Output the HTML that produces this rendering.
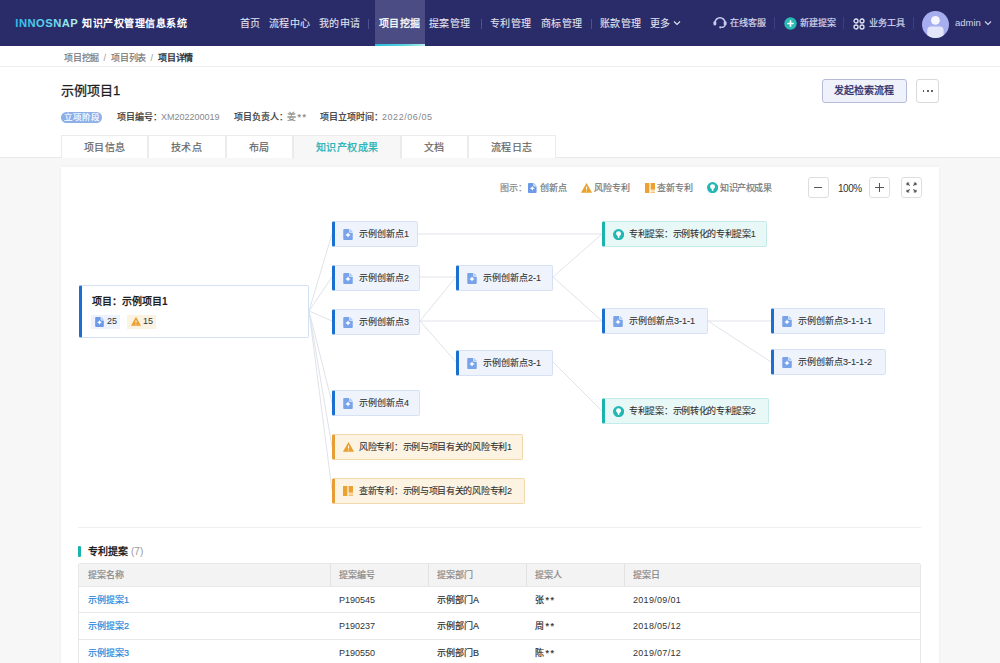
<!DOCTYPE html>
<html lang="zh-CN"><head><meta charset="utf-8">
<style>
*{margin:0;padding:0}
html,body{width:1000px;height:663px;overflow:hidden;background:#f7f7f7;font-family:"Liberation Sans",sans-serif;color:#333}
.a{position:absolute;white-space:nowrap;line-height:14px}
</style></head><body>
<div class="a" style="left:0px;top:0px;width:1000px;height:46px;background:#2a2c6a;"></div>
<svg class="a" style="left:0px;top:0px" width="100" height="46" viewBox="0 0 100 46"><defs><linearGradient id="lg" x1="15" y1="0" x2="78" y2="0" gradientUnits="userSpaceOnUse"><stop offset="0" stop-color="#2dbde8"/><stop offset="0.55" stop-color="#62d6ea"/><stop offset="1" stop-color="#b8f4ec"/></linearGradient></defs><text x="15.3" y="27" font-family="Liberation Sans" font-weight="bold" font-size="11.2" textLength="62.5" lengthAdjust="spacing" fill="url(#lg)" stroke="url(#lg)" stroke-width="0">INNOSNAP</text></svg>
<div class="a" style="left:82px;top:16px;font-size:10px;color:#fff;font-weight:bold;letter-spacing:0.55px;line-height:16px">知识产权管理信息系统</div>
<div class="a" style="left:375px;top:0px;width:50px;height:46px;background:#4a4c83;"></div>
<div class="a" style="left:375px;top:44px;width:50px;height:2px;background:linear-gradient(90deg,#27bcd8,#5fd3e0 60%,#b5f1ea);"></div>
<div class="a" style="left:379px;top:16px;font-size:10px;color:#fff;font-weight:normal;letter-spacing:0.25px;line-height:16px;-webkit-text-stroke:0.3px #fff">项目挖掘</div>
<div class="a" style="left:240px;top:16px;font-size:10px;color:#e3e4f1;font-weight:normal;letter-spacing:0.25px;line-height:16px;-webkit-text-stroke:0.08px #e3e4f1">首页</div>
<div class="a" style="left:269px;top:16px;font-size:10px;color:#e3e4f1;font-weight:normal;letter-spacing:0.25px;line-height:16px;-webkit-text-stroke:0.08px #e3e4f1">流程中心</div>
<div class="a" style="left:319px;top:16px;font-size:10px;color:#e3e4f1;font-weight:normal;letter-spacing:0.25px;line-height:16px;-webkit-text-stroke:0.08px #e3e4f1">我的申请</div>
<div class="a" style="left:429px;top:16px;font-size:10px;color:#e3e4f1;font-weight:normal;letter-spacing:0.25px;line-height:16px;-webkit-text-stroke:0.08px #e3e4f1">提案管理</div>
<div class="a" style="left:490px;top:16px;font-size:10px;color:#e3e4f1;font-weight:normal;letter-spacing:0.25px;line-height:16px;-webkit-text-stroke:0.08px #e3e4f1">专利管理</div>
<div class="a" style="left:541px;top:16px;font-size:10px;color:#e3e4f1;font-weight:normal;letter-spacing:0.25px;line-height:16px;-webkit-text-stroke:0.08px #e3e4f1">商标管理</div>
<div class="a" style="left:600px;top:16px;font-size:10px;color:#e3e4f1;font-weight:normal;letter-spacing:0.25px;line-height:16px;-webkit-text-stroke:0.08px #e3e4f1">账款管理</div>
<div class="a" style="left:650px;top:16px;font-size:10px;color:#e3e4f1;font-weight:normal;letter-spacing:0.25px;line-height:16px;-webkit-text-stroke:0.08px #e3e4f1">更多</div>
<div class="a" style="left:368px;top:19px;width:1px;height:10px;background:#4d5090;"></div>
<div class="a" style="left:481px;top:19px;width:1px;height:10px;background:#4d5090;"></div>
<div class="a" style="left:591px;top:19px;width:1px;height:10px;background:#4d5090;"></div>
<svg class="a" style="left:673px;top:20px" width="8" height="6" viewBox="0 0 8 6"><path d="M1 1.5L4 4.5L7 1.5" fill="none" stroke="#e3e4f1" stroke-width="1.1"/></svg>
<svg class="a" style="left:713px;top:15px" width="14" height="13.5" viewBox="0 0 14 13.5"><g fill="#c9cbef"><path d="M2.1 7.6A4.9 4.9 0 0 1 11.9 7.6" fill="none" stroke="#c9cbef" stroke-width="1.5"/><rect x="0.4" y="6.2" width="2.9" height="4.2" rx="1.3"/><rect x="10.7" y="6.2" width="2.9" height="4.2" rx="1.3"/><path d="M12.1 10Q11.6 12.3 8.2 12.4" fill="none" stroke="#c9cbef" stroke-width="1.2"/><circle cx="7.3" cy="12.3" r="1.15"/></g></svg>
<div class="a" style="left:730px;top:16px;font-size:9px;color:#d4d5ec;font-weight:normal;letter-spacing:0px;line-height:14px;-webkit-text-stroke:0.2px #d4d5ec">在线客服</div>
<div class="a" style="left:774px;top:17px;width:1px;height:12px;background:#3d4080;"></div>
<svg class="a" style="left:784px;top:17px" width="13" height="13" viewBox="0 0 13 13"><circle cx="6.5" cy="6.5" r="6.2" fill="#2bb9b3"/><path d="M6.5 3.3v6.4M3.3 6.5h6.4" stroke="#fff" stroke-width="1.6"/></svg>
<div class="a" style="left:800px;top:16px;font-size:9px;color:#d4d5ec;font-weight:normal;letter-spacing:0px;line-height:14px;-webkit-text-stroke:0.2px #d4d5ec">新建提案</div>
<div class="a" style="left:843px;top:17px;width:1px;height:12px;background:#3d4080;"></div>
<svg class="a" style="left:853px;top:18px" width="12" height="12" viewBox="0 0 12 12"><g fill="none" stroke="#e3e4f1" stroke-width="1.3"><circle cx="3" cy="3" r="2"/><circle cx="9" cy="3" r="2"/><circle cx="3" cy="9" r="2"/><circle cx="9" cy="9" r="2"/></g></svg>
<div class="a" style="left:869px;top:16px;font-size:9px;color:#d4d5ec;font-weight:normal;letter-spacing:0px;line-height:14px;-webkit-text-stroke:0.2px #d4d5ec">业务工具</div>
<div class="a" style="left:913px;top:17px;width:1px;height:12px;background:#3d4080;"></div>
<svg class="a" style="left:922px;top:11px" width="27" height="27" viewBox="0 0 27 27"><defs><clipPath id="cp"><circle cx="13.5" cy="13.5" r="13.5"/></clipPath></defs><circle cx="13.5" cy="13.5" r="13.5" fill="#a7aef0"/><g clip-path="url(#cp)"><circle cx="13.4" cy="9.3" r="4.4" fill="#f4f5fd"/><rect x="5.2" y="15.6" width="16.4" height="14" rx="4" fill="#e3e5fa"/></g></svg>
<div class="a" style="left:955px;top:16px;font-size:9.5px;color:#d2d4ea;font-weight:normal;letter-spacing:0px;line-height:14px">admin</div>
<svg class="a" style="left:984px;top:20px" width="8" height="6" viewBox="0 0 8 6"><path d="M1 1.5L4 4.5L7 1.5" fill="none" stroke="#d2d4ea" stroke-width="1.1"/></svg>
<div class="a" style="left:0px;top:46px;width:1000px;height:112px;background:#fff;"></div>
<div class="a" style="left:0px;top:66px;width:1000px;height:1px;background:#eeeeee;"></div>
<div class="a" style="left:64px;top:51px;font-size:9px;color:#777;font-weight:normal;letter-spacing:-0.2px;line-height:14px;-webkit-text-stroke:0.2px #777">项目挖掘</div>
<div class="a" style="left:103.5px;top:51px;font-size:9px;color:#999;font-weight:normal;letter-spacing:0px;line-height:14px">/</div>
<div class="a" style="left:111px;top:51px;font-size:9px;color:#777;font-weight:normal;letter-spacing:-0.2px;line-height:14px;-webkit-text-stroke:0.2px #777">项目列表</div>
<div class="a" style="left:150.5px;top:51px;font-size:9px;color:#999;font-weight:normal;letter-spacing:0px;line-height:14px">/</div>
<div class="a" style="left:158px;top:51px;font-size:9px;color:#333;font-weight:bold;letter-spacing:-0.2px;line-height:14px">项目详情</div>
<div class="a" style="left:61px;top:82px;font-size:13px;color:#1f1f1f;font-weight:normal;letter-spacing:0px;line-height:18px;-webkit-text-stroke:0.3px #1f1f1f">示例项目1</div>
<div class="a" style="left:61px;top:112px;width:41px;height:11px;background:#8caee9;border-radius:6px"></div>
<div class="a" style="left:64px;top:110px;font-size:8.5px;color:#f8fbff;font-weight:normal;letter-spacing:0.05px;line-height:14px;-webkit-text-stroke:0.2px #f8fbff">立项阶段</div>
<div class="a" style="left:117px;top:110px;font-size:9px;color:#333;font-weight:normal;letter-spacing:0px;line-height:14px;-webkit-text-stroke:0.22px #333">项目编号：</div>
<div class="a" style="left:161px;top:110px;font-size:9px;color:#888;font-weight:normal;letter-spacing:0px;line-height:14px">XM202200019</div>
<div class="a" style="left:234px;top:110px;font-size:9px;color:#333;font-weight:normal;letter-spacing:0px;line-height:14px;-webkit-text-stroke:0.22px #333">项目负责人：</div>
<div class="a" style="left:287px;top:110px;font-size:9px;color:#888;font-weight:normal;letter-spacing:0px;line-height:14px;-webkit-text-stroke:0.2px #888">姜<span style="margin-left:1.5px;letter-spacing:1.4px">**</span></div>
<div class="a" style="left:320px;top:110px;font-size:9px;color:#333;font-weight:normal;letter-spacing:0px;line-height:14px;-webkit-text-stroke:0.22px #333">项目立项时间：</div>
<div class="a" style="left:382px;top:110px;font-size:9px;color:#888;font-weight:normal;letter-spacing:0.55px;line-height:14px">2022/06/05</div>
<div class="a" style="left:822px;top:79px;width:85px;height:24px;background:#eff2fb;border:1px solid #b5bad9;border-radius:3px;box-sizing:border-box"></div>
<div class="a" style="left:834px;top:83px;font-size:10px;color:#2d306c;font-weight:normal;letter-spacing:0.05px;line-height:16px;-webkit-text-stroke:0.3px #2d306c">发起检索流程</div>
<div class="a" style="left:916px;top:79px;width:23px;height:24px;background:#fff;border:1px solid #d9d9d9;border-radius:3px;box-sizing:border-box"></div>
<div class="a" style="left:922.5px;top:90px;width:1.8px;height:1.8px;background:#333;border-radius:1px"></div>
<div class="a" style="left:926.8px;top:90px;width:1.8px;height:1.8px;background:#333;border-radius:1px"></div>
<div class="a" style="left:931.1px;top:90px;width:1.8px;height:1.8px;background:#333;border-radius:1px"></div>
<div class="a" style="left:0px;top:158px;width:1000px;height:505px;background:#f7f7f7;"></div>
<div class="a" style="left:0px;top:157px;width:1000px;height:1px;background:#e9e9e9;"></div>
<div class="a" style="left:61px;top:135px;width:87px;height:23px;background:#fff;border:1px solid #ebebeb;border-bottom:none;box-sizing:border-box"></div>
<div class="a" style="left:148px;top:135px;width:78px;height:23px;background:#fff;border:1px solid #ebebeb;border-bottom:none;box-sizing:border-box"></div>
<div class="a" style="left:226px;top:135px;width:67px;height:23px;background:#fff;border:1px solid #ebebeb;border-bottom:none;box-sizing:border-box"></div>
<div class="a" style="left:293px;top:135px;width:108px;height:23px;background:#f7f7f7;border:1px solid #ebebeb;border-bottom:none;box-sizing:border-box;height:24px"></div>
<div class="a" style="left:401px;top:135px;width:67px;height:23px;background:#fff;border:1px solid #ebebeb;border-bottom:none;box-sizing:border-box"></div>
<div class="a" style="left:468px;top:135px;width:88px;height:23px;background:#fff;border:1px solid #ebebeb;border-bottom:none;box-sizing:border-box"></div>
<div class="a" style="left:84px;top:140px;font-size:10px;color:#666;font-weight:normal;letter-spacing:0.3px;line-height:16px;-webkit-text-stroke:0.2px #666">项目信息</div>
<div class="a" style="left:171px;top:140px;font-size:10px;color:#666;font-weight:normal;letter-spacing:0.3px;line-height:16px;-webkit-text-stroke:0.2px #666">技术点</div>
<div class="a" style="left:249px;top:140px;font-size:10px;color:#666;font-weight:normal;letter-spacing:0.3px;line-height:16px;-webkit-text-stroke:0.2px #666">布局</div>
<div class="a" style="left:316px;top:140px;font-size:10px;color:#1fb1b5;font-weight:normal;letter-spacing:0.4px;line-height:16px;-webkit-text-stroke:0.25px #1fb1b5">知识产权成果</div>
<div class="a" style="left:424px;top:140px;font-size:10px;color:#666;font-weight:normal;letter-spacing:0.3px;line-height:16px;-webkit-text-stroke:0.2px #666">文档</div>
<div class="a" style="left:491px;top:140px;font-size:10px;color:#666;font-weight:normal;letter-spacing:0.3px;line-height:16px;-webkit-text-stroke:0.2px #666">流程日志</div>
<div class="a" style="left:61px;top:167px;width:878px;height:500px;background:#fff;box-shadow:0 0 3px rgba(0,0,0,0.05)"></div>
<div class="a" style="left:500px;top:181px;font-size:9px;color:#888;font-weight:normal;letter-spacing:0px;line-height:14px;-webkit-text-stroke:0.2px #888">图示：</div>
<svg class="a" style="left:528px;top:182.5px" width="8.6" height="10" viewBox="0 0 9.5 11"><path d="M1 0H6V3A0.8 0.8 0 0 0 6.8 3.8H9.5V10A1 1 0 0 1 8.5 11H1A1 1 0 0 1 0 10V1A1 1 0 0 1 1 0Z" fill="#6d9ae6"/><path d="M6.8 0.1L9.5 2.9V3H6.8Z" fill="#6d9ae6" opacity="0.55"/><path d="M4.75 3.2Q5.05 5.3 7.4 5.9Q5.05 6.5 4.75 8.6Q4.45 6.5 2.1 5.9Q4.45 5.3 4.75 3.2Z" fill="#fff"/></svg>
<div class="a" style="left:540px;top:181px;font-size:9px;color:#777;font-weight:normal;letter-spacing:0px;line-height:14px;-webkit-text-stroke:0.2px #777">创新点</div>
<svg class="a" style="left:581px;top:183px" width="11" height="10" viewBox="0 0 11 10"><path d="M5.2 0.4Q5.5 0 5.8 0.4L10.8 9.2Q11 9.8 10.4 9.8H0.6Q0 9.8 0.2 9.2Z" fill="#eaa12f"/><path d="M5.5 3.6v3" stroke="#fff8e8" stroke-width="1.1"/><circle cx="5.5" cy="8" r="0.6" fill="#fff8e8"/></svg>
<div class="a" style="left:594px;top:181px;font-size:9px;color:#777;font-weight:normal;letter-spacing:0px;line-height:14px;-webkit-text-stroke:0.2px #777">风险专利</div>
<svg class="a" style="left:645px;top:183px" width="10" height="10" viewBox="0 0 9.6 9.6"><rect x="0" y="0" width="4.2" height="9.6" fill="#eba231"/><rect x="5.4" y="0" width="4.2" height="6.4" fill="#eba231"/><rect x="5.4" y="7.2" width="4.2" height="0.9" fill="#eba231" opacity="0.7"/><rect x="5.4" y="8.7" width="4.2" height="0.9" fill="#eba231" opacity="0.7"/></svg>
<div class="a" style="left:657px;top:181px;font-size:9px;color:#777;font-weight:normal;letter-spacing:0px;line-height:14px;-webkit-text-stroke:0.2px #777">查新专利</div>
<svg class="a" style="left:707px;top:182px" width="11.2" height="11.2" viewBox="0 0 11.2 11.2"><circle cx="5.6" cy="5.6" r="5.6" fill="#22b7b3"/><path d="M5.6 2.2A2.5 2.5 0 0 1 8.1 4.7Q8.1 5.9 6.5 6.9L6.3 8.9H4.9L4.7 6.9Q3.1 5.9 3.1 4.7A2.5 2.5 0 0 1 5.6 2.2Z" fill="#fff"/></svg>
<div class="a" style="left:720px;top:181px;font-size:9px;color:#777;font-weight:normal;letter-spacing:-0.4px;line-height:14px;-webkit-text-stroke:0.2px #777">知识产权成果</div>
<div class="a" style="left:808px;top:177px;width:20.5px;height:20.5px;background:#fff;border:1px solid #dedede;border-radius:3px;box-sizing:border-box"></div>
<div class="a" style="left:869px;top:177px;width:20.5px;height:20.5px;background:#fff;border:1px solid #dedede;border-radius:3px;box-sizing:border-box"></div>
<div class="a" style="left:901px;top:177px;width:20.5px;height:20.5px;background:#fff;border:1px solid #dedede;border-radius:3px;box-sizing:border-box"></div>
<div class="a" style="left:814px;top:187px;width:8px;height:1.2px;background:#555;"></div>
<div class="a" style="left:838px;top:182px;font-size:10px;color:#333;font-weight:normal;letter-spacing:-0.45px;line-height:14px">100%</div>
<div class="a" style="left:875px;top:187px;width:9px;height:1.2px;background:#555;"></div>
<div class="a" style="left:878.9px;top:183px;width:1.2px;height:9px;background:#555;"></div>
<svg class="a" style="left:906px;top:182px" width="11" height="11" viewBox="0 0 11 11"><g fill="none" stroke="#555" stroke-width="1.1"><path d="M1 1L3.6 3.6M1 1h2.2M1 1v2.2"/><path d="M10 1L7.4 3.6M10 1H7.8M10 1v2.2"/><path d="M1 10L3.6 7.4M1 10h2.2M1 10V7.8"/><path d="M10 10L7.4 7.4M10 10H7.8M10 10V7.8"/></g></svg>
<svg class="a" style="left:0px;top:0px" width="1000" height="663" viewBox="0 0 1000 663"><path d="M309 311L332 234M309 311L332 277M309 311L332 321M309 311L332 403M309 311L332 447M309 311L332 490 M418 234H602M420 277H456M420 321H602M420 321L456 277M420 321L456 362 M553 277L602 234M553 277L602 321M553 362L602 411 M708 321H771M708 321L771 362" stroke="#dfe3ea" stroke-width="1" fill="none"/></svg>
<div class="a" style="left:79px;top:285px;width:230px;height:53px;background:#fff;border:1px solid #d4e0f3;border-left:3px solid #1a6fd1;border-radius:2px;box-sizing:border-box"></div>
<div class="a" style="left:92px;top:294px;font-size:10px;color:#1f1f1f;font-weight:bold;letter-spacing:0px;line-height:16px">项目：示例项目1</div>
<div class="a" style="left:91px;top:315px;width:29px;height:14px;background:#edf2fc;"></div>
<svg class="a" style="left:95px;top:317px" width="9" height="10" viewBox="0 0 9.5 11"><path d="M1 0H6V3A0.8 0.8 0 0 0 6.8 3.8H9.5V10A1 1 0 0 1 8.5 11H1A1 1 0 0 1 0 10V1A1 1 0 0 1 1 0Z" fill="#6d9ae6"/><path d="M6.8 0.1L9.5 2.9V3H6.8Z" fill="#6d9ae6" opacity="0.55"/><path d="M4.75 3.2Q5.05 5.3 7.4 5.9Q5.05 6.5 4.75 8.6Q4.45 6.5 2.1 5.9Q4.45 5.3 4.75 3.2Z" fill="#fff"/></svg>
<div class="a" style="left:107px;top:314px;font-size:9px;color:#333;font-weight:normal;letter-spacing:0px;line-height:14px">25</div>
<div class="a" style="left:127px;top:315px;width:29px;height:14px;background:#fcf2e1;"></div>
<svg class="a" style="left:130.5px;top:317px" width="10" height="9" viewBox="0 0 11 10"><path d="M5.2 0.4Q5.5 0 5.8 0.4L10.8 9.2Q11 9.8 10.4 9.8H0.6Q0 9.8 0.2 9.2Z" fill="#eaa12f"/><path d="M5.5 3.6v3" stroke="#fff8e8" stroke-width="1.1"/><circle cx="5.5" cy="8" r="0.6" fill="#fff8e8"/></svg>
<div class="a" style="left:143px;top:314px;font-size:9px;color:#333;font-weight:normal;letter-spacing:0px;line-height:14px">15</div>
<div class="a" style="left:332px;top:221px;width:86px;height:26px;background:#eef3fc;border:1px solid #d6e1f4;border-left:3px solid #1a6fd1;border-radius:2px;box-sizing:border-box"></div>
<svg class="a" style="left:342.5px;top:228.5px" width="10" height="11" viewBox="0 0 9.5 11"><path d="M1 0H6V3A0.8 0.8 0 0 0 6.8 3.8H9.5V10A1 1 0 0 1 8.5 11H1A1 1 0 0 1 0 10V1A1 1 0 0 1 1 0Z" fill="#78a3e9"/><path d="M6.8 0.1L9.5 2.9V3H6.8Z" fill="#78a3e9" opacity="0.55"/><path d="M4.75 3.2Q5.05 5.3 7.4 5.9Q5.05 6.5 4.75 8.6Q4.45 6.5 2.1 5.9Q4.45 5.3 4.75 3.2Z" fill="#fff"/></svg>
<div class="a" style="left:359px;top:227px;font-size:9px;color:#333;font-weight:normal;letter-spacing:0px;line-height:14px;-webkit-text-stroke:0.1px #333">示例创新点1</div>
<div class="a" style="left:332px;top:265px;width:88px;height:26px;background:#eef3fc;border:1px solid #d6e1f4;border-left:3px solid #1a6fd1;border-radius:2px;box-sizing:border-box"></div>
<svg class="a" style="left:342.5px;top:272.5px" width="10" height="11" viewBox="0 0 9.5 11"><path d="M1 0H6V3A0.8 0.8 0 0 0 6.8 3.8H9.5V10A1 1 0 0 1 8.5 11H1A1 1 0 0 1 0 10V1A1 1 0 0 1 1 0Z" fill="#78a3e9"/><path d="M6.8 0.1L9.5 2.9V3H6.8Z" fill="#78a3e9" opacity="0.55"/><path d="M4.75 3.2Q5.05 5.3 7.4 5.9Q5.05 6.5 4.75 8.6Q4.45 6.5 2.1 5.9Q4.45 5.3 4.75 3.2Z" fill="#fff"/></svg>
<div class="a" style="left:359px;top:271px;font-size:9px;color:#333;font-weight:normal;letter-spacing:0px;line-height:14px;-webkit-text-stroke:0.1px #333">示例创新点2</div>
<div class="a" style="left:332px;top:309px;width:88px;height:26px;background:#eef3fc;border:1px solid #d6e1f4;border-left:3px solid #1a6fd1;border-radius:2px;box-sizing:border-box"></div>
<svg class="a" style="left:342.5px;top:316.5px" width="10" height="11" viewBox="0 0 9.5 11"><path d="M1 0H6V3A0.8 0.8 0 0 0 6.8 3.8H9.5V10A1 1 0 0 1 8.5 11H1A1 1 0 0 1 0 10V1A1 1 0 0 1 1 0Z" fill="#78a3e9"/><path d="M6.8 0.1L9.5 2.9V3H6.8Z" fill="#78a3e9" opacity="0.55"/><path d="M4.75 3.2Q5.05 5.3 7.4 5.9Q5.05 6.5 4.75 8.6Q4.45 6.5 2.1 5.9Q4.45 5.3 4.75 3.2Z" fill="#fff"/></svg>
<div class="a" style="left:359px;top:315px;font-size:9px;color:#333;font-weight:normal;letter-spacing:0px;line-height:14px;-webkit-text-stroke:0.1px #333">示例创新点3</div>
<div class="a" style="left:332px;top:390px;width:88px;height:26px;background:#eef3fc;border:1px solid #d6e1f4;border-left:3px solid #1a6fd1;border-radius:2px;box-sizing:border-box"></div>
<svg class="a" style="left:342.5px;top:397.5px" width="10" height="11" viewBox="0 0 9.5 11"><path d="M1 0H6V3A0.8 0.8 0 0 0 6.8 3.8H9.5V10A1 1 0 0 1 8.5 11H1A1 1 0 0 1 0 10V1A1 1 0 0 1 1 0Z" fill="#78a3e9"/><path d="M6.8 0.1L9.5 2.9V3H6.8Z" fill="#78a3e9" opacity="0.55"/><path d="M4.75 3.2Q5.05 5.3 7.4 5.9Q5.05 6.5 4.75 8.6Q4.45 6.5 2.1 5.9Q4.45 5.3 4.75 3.2Z" fill="#fff"/></svg>
<div class="a" style="left:359px;top:396px;font-size:9px;color:#333;font-weight:normal;letter-spacing:0px;line-height:14px;-webkit-text-stroke:0.1px #333">示例创新点4</div>
<div class="a" style="left:332px;top:434px;width:191px;height:26px;background:#fdf3e2;border:1px solid #f2d9ac;border-left:3px solid #e79f35;border-radius:2px;box-sizing:border-box"></div>
<svg class="a" style="left:342.5px;top:442px" width="11" height="10" viewBox="0 0 11 10"><path d="M5.2 0.4Q5.5 0 5.8 0.4L10.8 9.2Q11 9.8 10.4 9.8H0.6Q0 9.8 0.2 9.2Z" fill="#eaa12f"/><path d="M5.5 3.6v3" stroke="#fff8e8" stroke-width="1.1"/><circle cx="5.5" cy="8" r="0.6" fill="#fff8e8"/></svg>
<div class="a" style="left:359px;top:440px;font-size:9px;color:#333;font-weight:normal;letter-spacing:-0.3px;line-height:14px;-webkit-text-stroke:0.1px #333">风险专利：示例与项目有关的风险专利1</div>
<div class="a" style="left:332px;top:478px;width:193px;height:26px;background:#fdf3e2;border:1px solid #f2d9ac;border-left:3px solid #e79f35;border-radius:2px;box-sizing:border-box"></div>
<svg class="a" style="left:342.5px;top:485.5px" width="10" height="10" viewBox="0 0 9.6 9.6"><rect x="0" y="0" width="4.2" height="9.6" fill="#eba231"/><rect x="5.4" y="0" width="4.2" height="6.4" fill="#eba231"/><rect x="5.4" y="7.2" width="4.2" height="0.9" fill="#eba231" opacity="0.7"/><rect x="5.4" y="8.7" width="4.2" height="0.9" fill="#eba231" opacity="0.7"/></svg>
<div class="a" style="left:359px;top:484px;font-size:9px;color:#333;font-weight:normal;letter-spacing:-0.3px;line-height:14px;-webkit-text-stroke:0.1px #333">查新专利：示例与项目有关的风险专利2</div>
<div class="a" style="left:456px;top:265px;width:97px;height:26px;background:#eef3fc;border:1px solid #d6e1f4;border-left:3px solid #1a6fd1;border-radius:2px;box-sizing:border-box"></div>
<svg class="a" style="left:466.5px;top:272.5px" width="10" height="11" viewBox="0 0 9.5 11"><path d="M1 0H6V3A0.8 0.8 0 0 0 6.8 3.8H9.5V10A1 1 0 0 1 8.5 11H1A1 1 0 0 1 0 10V1A1 1 0 0 1 1 0Z" fill="#78a3e9"/><path d="M6.8 0.1L9.5 2.9V3H6.8Z" fill="#78a3e9" opacity="0.55"/><path d="M4.75 3.2Q5.05 5.3 7.4 5.9Q5.05 6.5 4.75 8.6Q4.45 6.5 2.1 5.9Q4.45 5.3 4.75 3.2Z" fill="#fff"/></svg>
<div class="a" style="left:483px;top:271px;font-size:9px;color:#333;font-weight:normal;letter-spacing:0px;line-height:14px;-webkit-text-stroke:0.1px #333">示例创新点2-1</div>
<div class="a" style="left:456px;top:350px;width:97px;height:26px;background:#eef3fc;border:1px solid #d6e1f4;border-left:3px solid #1a6fd1;border-radius:2px;box-sizing:border-box"></div>
<svg class="a" style="left:466.5px;top:357.5px" width="10" height="11" viewBox="0 0 9.5 11"><path d="M1 0H6V3A0.8 0.8 0 0 0 6.8 3.8H9.5V10A1 1 0 0 1 8.5 11H1A1 1 0 0 1 0 10V1A1 1 0 0 1 1 0Z" fill="#78a3e9"/><path d="M6.8 0.1L9.5 2.9V3H6.8Z" fill="#78a3e9" opacity="0.55"/><path d="M4.75 3.2Q5.05 5.3 7.4 5.9Q5.05 6.5 4.75 8.6Q4.45 6.5 2.1 5.9Q4.45 5.3 4.75 3.2Z" fill="#fff"/></svg>
<div class="a" style="left:483px;top:356px;font-size:9px;color:#333;font-weight:normal;letter-spacing:0px;line-height:14px;-webkit-text-stroke:0.1px #333">示例创新点3-1</div>
<div class="a" style="left:602px;top:221px;width:165px;height:26px;background:#e8f8f7;border:1px solid #c4ebe9;border-left:3px solid #1bb3ae;border-radius:2px;box-sizing:border-box"></div>
<svg class="a" style="left:612.5px;top:228.5px" width="11.2" height="11.2" viewBox="0 0 11.2 11.2"><circle cx="5.6" cy="5.6" r="5.6" fill="#22b7b3"/><path d="M5.6 2.2A2.5 2.5 0 0 1 8.1 4.7Q8.1 5.9 6.5 6.9L6.3 8.9H4.9L4.7 6.9Q3.1 5.9 3.1 4.7A2.5 2.5 0 0 1 5.6 2.2Z" fill="#fff"/></svg>
<div class="a" style="left:629px;top:227px;font-size:9px;color:#333;font-weight:normal;letter-spacing:-0.3px;line-height:14px;-webkit-text-stroke:0.1px #333">专利提案：示例转化的专利提案1</div>
<div class="a" style="left:602px;top:308px;width:106px;height:26px;background:#eef3fc;border:1px solid #d6e1f4;border-left:3px solid #1a6fd1;border-radius:2px;box-sizing:border-box"></div>
<svg class="a" style="left:612.5px;top:315.5px" width="10" height="11" viewBox="0 0 9.5 11"><path d="M1 0H6V3A0.8 0.8 0 0 0 6.8 3.8H9.5V10A1 1 0 0 1 8.5 11H1A1 1 0 0 1 0 10V1A1 1 0 0 1 1 0Z" fill="#78a3e9"/><path d="M6.8 0.1L9.5 2.9V3H6.8Z" fill="#78a3e9" opacity="0.55"/><path d="M4.75 3.2Q5.05 5.3 7.4 5.9Q5.05 6.5 4.75 8.6Q4.45 6.5 2.1 5.9Q4.45 5.3 4.75 3.2Z" fill="#fff"/></svg>
<div class="a" style="left:629px;top:314px;font-size:9px;color:#333;font-weight:normal;letter-spacing:0px;line-height:14px;-webkit-text-stroke:0.1px #333">示例创新点3-1-1</div>
<div class="a" style="left:602px;top:398px;width:167px;height:26px;background:#e8f8f7;border:1px solid #c4ebe9;border-left:3px solid #1bb3ae;border-radius:2px;box-sizing:border-box"></div>
<svg class="a" style="left:612.5px;top:405.5px" width="11.2" height="11.2" viewBox="0 0 11.2 11.2"><circle cx="5.6" cy="5.6" r="5.6" fill="#22b7b3"/><path d="M5.6 2.2A2.5 2.5 0 0 1 8.1 4.7Q8.1 5.9 6.5 6.9L6.3 8.9H4.9L4.7 6.9Q3.1 5.9 3.1 4.7A2.5 2.5 0 0 1 5.6 2.2Z" fill="#fff"/></svg>
<div class="a" style="left:629px;top:404px;font-size:9px;color:#333;font-weight:normal;letter-spacing:-0.3px;line-height:14px;-webkit-text-stroke:0.1px #333">专利提案：示例转化的专利提案2</div>
<div class="a" style="left:771px;top:308px;width:114px;height:26px;background:#eef3fc;border:1px solid #d6e1f4;border-left:3px solid #1a6fd1;border-radius:2px;box-sizing:border-box"></div>
<svg class="a" style="left:781.5px;top:315.5px" width="10" height="11" viewBox="0 0 9.5 11"><path d="M1 0H6V3A0.8 0.8 0 0 0 6.8 3.8H9.5V10A1 1 0 0 1 8.5 11H1A1 1 0 0 1 0 10V1A1 1 0 0 1 1 0Z" fill="#78a3e9"/><path d="M6.8 0.1L9.5 2.9V3H6.8Z" fill="#78a3e9" opacity="0.55"/><path d="M4.75 3.2Q5.05 5.3 7.4 5.9Q5.05 6.5 4.75 8.6Q4.45 6.5 2.1 5.9Q4.45 5.3 4.75 3.2Z" fill="#fff"/></svg>
<div class="a" style="left:798px;top:314px;font-size:9px;color:#333;font-weight:normal;letter-spacing:0px;line-height:14px;-webkit-text-stroke:0.1px #333">示例创新点3-1-1-1</div>
<div class="a" style="left:771px;top:349px;width:115px;height:26px;background:#eef3fc;border:1px solid #d6e1f4;border-left:3px solid #1a6fd1;border-radius:2px;box-sizing:border-box"></div>
<svg class="a" style="left:781.5px;top:356.5px" width="10" height="11" viewBox="0 0 9.5 11"><path d="M1 0H6V3A0.8 0.8 0 0 0 6.8 3.8H9.5V10A1 1 0 0 1 8.5 11H1A1 1 0 0 1 0 10V1A1 1 0 0 1 1 0Z" fill="#78a3e9"/><path d="M6.8 0.1L9.5 2.9V3H6.8Z" fill="#78a3e9" opacity="0.55"/><path d="M4.75 3.2Q5.05 5.3 7.4 5.9Q5.05 6.5 4.75 8.6Q4.45 6.5 2.1 5.9Q4.45 5.3 4.75 3.2Z" fill="#fff"/></svg>
<div class="a" style="left:798px;top:355px;font-size:9px;color:#333;font-weight:normal;letter-spacing:0px;line-height:14px;-webkit-text-stroke:0.1px #333">示例创新点3-1-1-2</div>
<div class="a" style="left:78px;top:527px;width:843px;height:1px;background:#f0f0f0;"></div>
<div class="a" style="left:78px;top:546px;width:3px;height:11px;background:#1bb3b0;border-radius:1px"></div>
<div class="a" style="left:88px;top:544px;font-size:10px;color:#1f1f1f;font-weight:bold;letter-spacing:0px;line-height:16px">专利提案</div>
<div class="a" style="left:131px;top:544px;font-size:10px;color:#999;font-weight:normal;letter-spacing:0px;line-height:16px">(7)</div>
<div class="a" style="left:78px;top:563px;width:843px;height:110px;background:#fff;border:1px solid #e8e8e8;border-radius:2px;box-sizing:border-box"></div>
<div class="a" style="left:79px;top:564px;width:841px;height:23px;background:#f3f3f3;"></div>
<div class="a" style="left:79px;top:586px;width:841px;height:1px;background:#e8e8e8;"></div>
<div class="a" style="left:79px;top:612px;width:841px;height:1px;background:#e8e8e8;"></div>
<div class="a" style="left:79px;top:639px;width:841px;height:1px;background:#e8e8e8;"></div>
<div class="a" style="left:330px;top:564px;width:1px;height:22px;background:#e2e2e2;"></div>
<div class="a" style="left:428px;top:564px;width:1px;height:22px;background:#e2e2e2;"></div>
<div class="a" style="left:526px;top:564px;width:1px;height:22px;background:#e2e2e2;"></div>
<div class="a" style="left:624px;top:564px;width:1px;height:22px;background:#e2e2e2;"></div>
<div class="a" style="left:88px;top:568px;font-size:9px;color:#888;font-weight:normal;letter-spacing:0px;line-height:14px;-webkit-text-stroke:0.2px #888">提案名称</div>
<div class="a" style="left:339px;top:568px;font-size:9px;color:#888;font-weight:normal;letter-spacing:0px;line-height:14px;-webkit-text-stroke:0.2px #888">提案编号</div>
<div class="a" style="left:437px;top:568px;font-size:9px;color:#888;font-weight:normal;letter-spacing:0px;line-height:14px;-webkit-text-stroke:0.2px #888">提案部门</div>
<div class="a" style="left:535px;top:568px;font-size:9px;color:#888;font-weight:normal;letter-spacing:0px;line-height:14px;-webkit-text-stroke:0.2px #888">提案人</div>
<div class="a" style="left:633px;top:568px;font-size:9px;color:#888;font-weight:normal;letter-spacing:0px;line-height:14px;-webkit-text-stroke:0.2px #888">提案日</div>
<div class="a" style="left:88px;top:593px;font-size:9px;color:#2a86d8;font-weight:normal;letter-spacing:0px;line-height:14px;-webkit-text-stroke:0.2px #2a86d8">示例提案1</div>
<div class="a" style="left:339px;top:593px;font-size:9px;color:#333;font-weight:normal;letter-spacing:0px;line-height:14px">P190545</div>
<div class="a" style="left:437px;top:593px;font-size:9px;color:#333;font-weight:normal;letter-spacing:0px;line-height:14px;-webkit-text-stroke:0.2px #333">示例部门A</div>
<div class="a" style="left:535px;top:593px;font-size:9px;color:#333;font-weight:normal;letter-spacing:0px;line-height:14px;-webkit-text-stroke:0.2px #333">张<span style="margin-left:1.5px;letter-spacing:1.4px">**</span></div>
<div class="a" style="left:633px;top:593px;font-size:9px;color:#333;font-weight:normal;letter-spacing:0.3px;line-height:14px">2019/09/01</div>
<div class="a" style="left:88px;top:619px;font-size:9px;color:#2a86d8;font-weight:normal;letter-spacing:0px;line-height:14px;-webkit-text-stroke:0.2px #2a86d8">示例提案2</div>
<div class="a" style="left:339px;top:619px;font-size:9px;color:#333;font-weight:normal;letter-spacing:0px;line-height:14px">P190237</div>
<div class="a" style="left:437px;top:619px;font-size:9px;color:#333;font-weight:normal;letter-spacing:0px;line-height:14px;-webkit-text-stroke:0.2px #333">示例部门A</div>
<div class="a" style="left:535px;top:619px;font-size:9px;color:#333;font-weight:normal;letter-spacing:0px;line-height:14px;-webkit-text-stroke:0.2px #333">周<span style="margin-left:1.5px;letter-spacing:1.4px">**</span></div>
<div class="a" style="left:633px;top:619px;font-size:9px;color:#333;font-weight:normal;letter-spacing:0.3px;line-height:14px">2018/05/12</div>
<div class="a" style="left:88px;top:646px;font-size:9px;color:#2a86d8;font-weight:normal;letter-spacing:0px;line-height:14px;-webkit-text-stroke:0.2px #2a86d8">示例提案3</div>
<div class="a" style="left:339px;top:646px;font-size:9px;color:#333;font-weight:normal;letter-spacing:0px;line-height:14px">P190550</div>
<div class="a" style="left:437px;top:646px;font-size:9px;color:#333;font-weight:normal;letter-spacing:0px;line-height:14px;-webkit-text-stroke:0.2px #333">示例部门B</div>
<div class="a" style="left:535px;top:646px;font-size:9px;color:#333;font-weight:normal;letter-spacing:0px;line-height:14px;-webkit-text-stroke:0.2px #333">陈<span style="margin-left:1.5px;letter-spacing:1.4px">**</span></div>
<div class="a" style="left:633px;top:646px;font-size:9px;color:#333;font-weight:normal;letter-spacing:0.3px;line-height:14px">2019/07/12</div>
</body></html>
